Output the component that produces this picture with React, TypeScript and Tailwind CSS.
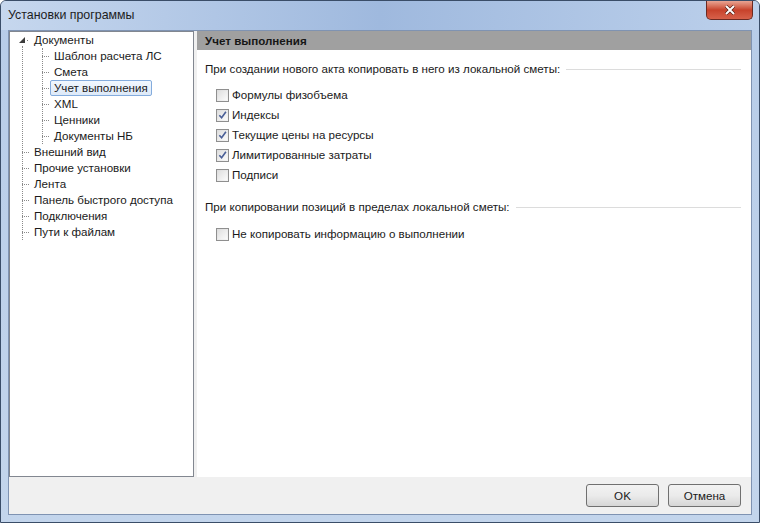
import React from 'react';

const font = { fontFamily: '"Liberation Sans", Arial, sans-serif' };

type Node = { label: string };

const Checkbox: React.FC<{ checked?: boolean; label: string }> = ({ checked, label }) => (
  <div className="flex items-center h-[20px] pl-[11px]">
    <div className="w-[13px] h-[13px] border border-[#8f8f8f] bg-gradient-to-br from-[#dcdcdc] to-[#f6f6f6] flex items-center justify-center">
      <div className="w-[9px] h-[9px] bg-gradient-to-br from-[#e0e0e0] to-[#fafafa] flex items-center justify-center">
        {checked && (
          <svg viewBox="0 0 10 10" className="w-[10px] h-[10px]">
            <path d="M1.5 5.2 L4 8 L8.8 1.5" fill="none" stroke="#4a5f97" strokeWidth="1.8" />
          </svg>
        )}
      </div>
    </div>
    <span className="ml-[3px] text-[11.6px] text-[#1a1a1a]">{label}</span>
  </div>
);

const Section: React.FC<{ title: string }> = ({ title }) => (
  <div className="flex items-center h-[18px] pr-[10px]">
    <span className="text-[11.6px] text-[#1a1a1a] whitespace-nowrap">{title}</span>
    <div className="flex-1 ml-[6px] h-px bg-[#dcdcdc]" />
  </div>
);

const TreeRow: React.FC<{ label: string; depth: number; selected?: boolean; expander?: boolean }> = ({
  label,
  depth,
  selected,
  expander,
}) => (
  <div className="flex items-center h-[16px]">
    <div className={depth === 0 ? 'w-[9px]' : 'w-[29px]'} />
    {expander ? (
      <div className="w-[10px] flex items-center">
        <svg viewBox="0 0 6 6" className="w-[6px] h-[6px]">
          <path d="M6 0 L6 6 L0 6 Z" fill="#3c3c3c" />
        </svg>
        <span className="ml-[2px] w-px h-px bg-[#808080]" />
      </div>
    ) : (
      <div className="w-[10px] flex">
        <div className="ml-[3px] w-[7px] border-t border-dotted border-[#8a8a8a] h-0" />
      </div>
    )}
    <span
      className={
        'ml-[1px] px-[3px] h-[16px] leading-[14px] text-[11.6px] text-[#1a1a1a] border rounded-[2px] ' +
        (selected ? 'border-[#84acdd] bg-gradient-to-b from-[#f2f8fe] to-[#dde9f8]' : 'border-transparent')
      }
    >
      {label}
    </span>
  </div>
);

export default function App() {
  const top: Node[] = [
    { label: 'Внешний вид' },
    { label: 'Прочие установки' },
    { label: 'Лента' },
    { label: 'Панель быстрого доступа' },
    { label: 'Подключения' },
    { label: 'Пути к файлам' },
  ];
  const docs = ['Шаблон расчета ЛС', 'Смета', 'Учет выполнения', 'XML', 'Ценники', 'Документы НБ'];

  return (
    <div
      className="w-[760px] h-[523px] flex flex-col border border-[#3a4d68] rounded-t-[6px] bg-gradient-to-b from-[#b7cce8] to-[#c3d5ec] overflow-hidden"
      style={font}
    >
      {/* title bar */}
      <div className="h-[29px] flex items-start bg-gradient-to-r from-[#c6d7ee] via-[#9fb9de] to-[#bcd0eb]">
        <span className="ml-[7px] mt-[5px] text-[12.4px] text-[#1d1d1d]">Установки программы</span>
        <div className="ml-auto mr-[6px] w-[47px] h-[19px] rounded-b-[5px] border border-t-0 border-[#6b2a22] bg-gradient-to-b from-[#e8a493] via-[#c7422b] to-[#d7614a] flex items-center justify-center">
          <svg viewBox="0 0 12 10" className="w-[12px] h-[10px]">
            <path d="M2 1 L10 9 M10 1 L2 9" stroke="#4a1a12" strokeWidth="3.2" />
            <path d="M2 1 L10 9 M10 1 L2 9" stroke="#ffffff" strokeWidth="2" />
          </svg>
        </div>
      </div>

      {/* client area */}
      <div className="flex-1 mx-[7px] mb-[7px] border border-[#7f93b2] bg-[#f0f0f0] flex flex-col">
        <div className="flex-1 flex">
          {/* tree */}
          <div className="w-[185px] bg-white border border-[#828790] relative">
            <div className="absolute left-[12px] top-[14px] h-[194px] border-l border-dotted border-[#8a8a8a]" />
            <div className="absolute left-[32px] top-[16px] h-[96px] border-l border-dotted border-[#8a8a8a]" />
            <TreeRow label="Документы" depth={0} expander />
            {docs.map((d) => (
              <TreeRow key={d} label={d} depth={1} selected={d === 'Учет выполнения'} />
            ))}
            {top.map((n) => (
              <TreeRow key={n.label} label={n.label} depth={0} />
            ))}
          </div>

          {/* right panel */}
          <div className="flex-1 ml-[3px] bg-white flex flex-col">
            <div className="h-[19px] bg-[#a0a0a0] flex items-center pl-[8px]">
              <span className="text-[11.6px] font-bold text-[#161616]">Учет выполнения</span>
            </div>
            <div className="pl-[8px] pt-[10px]">
              <Section title="При создании нового акта копировать в него из локальной сметы:" />
              <div className="mt-[7px]">
                <Checkbox label="Формулы физобъема" />
                <Checkbox checked label="Индексы" />
                <Checkbox checked label="Текущие цены на ресурсы" />
                <Checkbox checked label="Лимитированные затраты" />
                <Checkbox label="Подписи" />
              </div>
              <div className="mt-[13px]">
                <Section title="При копировании позиций в пределах локальной сметы:" />
              </div>
              <div className="mt-[8px]">
                <Checkbox label="Не копировать информацию о выполнении" />
              </div>
            </div>
          </div>
        </div>

        {/* buttons */}
        <div className="h-[37px] flex items-center justify-end gap-[9px] pr-[10px]">
          {['OK', 'Отмена'].map((b) => (
            <button
              key={b}
              className="w-[73px] h-[23px] rounded-[3px] border border-[#707070] bg-gradient-to-b from-[#f2f2f2] via-[#ebebeb] to-[#d6d6d6] text-[11.6px] text-[#1a1a1a]"
            >
              {b}
            </button>
          ))}
        </div>
      </div>
    </div>
  );
}
